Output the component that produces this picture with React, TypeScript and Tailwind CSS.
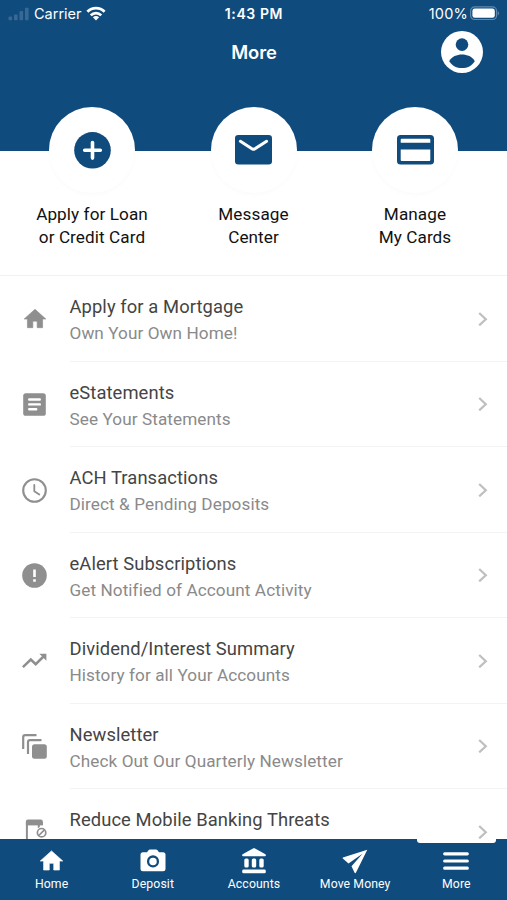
import type { ReactNode } from "react";

const BLUE = "#104b7d";

function Signal() {
  return (
    <svg width="22" height="14" viewBox="0 0 22 14" fill="#386995">
      <rect x="0.5" y="9.400" width="3.6" height="3.8" rx="1" />
      <rect x="6" y="7.400" width="3.6" height="5.8" rx="1" />
      <rect x="11.5" y="4" width="3.6" height="9.2" rx="1" />
      <rect x="17" y="0.8" width="3.6" height="12.4" rx="1" />
    </svg>
  );
}

function Wifi() {
  return (
    <svg width="20" height="15" viewBox="0 0 20 15" fill="none" stroke="#fff" strokeWidth="2.8">
      <path d="M1.4 5.8C6.2 0.9 13.8 0.9 18.6 5.8" />
      <path d="M4.8 9.4C7.7 6.4 12.3 6.4 15.2 9.4" />
      <path d="M10 14.4 6.9 11.3C8.7 9.6 11.3 9.6 13.1 11.3Z" fill="#fff" stroke="none" />
    </svg>
  );
}

function Battery() {
  return (
    <svg width="30" height="15" viewBox="0 0 30 15">
      <rect x="0.6" y="0.9" width="26" height="12.6" rx="4" fill="none" stroke="#6189ad" strokeWidth="1.2" />
      <rect x="2.4" y="2.6" width="22.4" height="9.2" rx="2.4" fill="#fff" />
      <path d="M27.800 5c1.6.7 1.6 3.7 0 4.4z" fill="#6189ad" />
    </svg>
  );
}

function Account() {
  return (
    <svg width="42" height="42" viewBox="0 0 42 42">
      <circle cx="21" cy="21" r="21" fill="#fff" />
      <circle cx="21" cy="13.6" r="6.3" fill={BLUE} />
      <path d="M8.2 30.2C10.6 25.600 16 23.500 21 23.500S31.400 25.600 33.800 30.200C30.900 34.700 26.300 37.100 21 37.100S11.100 34.700 8.200 30.200Z" fill={BLUE} />
    </svg>
  );
}

const homePath = "M10 20v-6h4v6h5v-8h3L12 3 2 12h3v8z";

function HomeIcon() {
  return (
    <svg width="26" height="28" viewBox="0 0 24 24" fill="#8f8f8f" stroke="#8f8f8f" strokeWidth="0.6" strokeLinejoin="round">
      <path d={homePath} />
    </svg>
  );
}

function StatementIcon() {
  return (
    <svg width="23" height="23" viewBox="0 0 23 23">
      <rect x="0.2" y="0.2" width="22.600" height="22.600" rx="2.600" fill="#8f8f8f" />
      <path d="M6.200 6.500h10.600M6.200 11.400h10.600M6.200 16.300h7" stroke="#fff" strokeWidth="2.400" strokeLinecap="round" />
    </svg>
  );
}

function ClockIcon() {
  return (
    <svg width="25" height="25" viewBox="0 0 25 25" fill="none" stroke="#8f8f8f" strokeLinecap="round">
      <circle cx="12.500" cy="12.500" r="11.300" strokeWidth="2.100" />
      <path d="M12.300 7v6.200l5 3.400" strokeWidth="1.800" />
    </svg>
  );
}

function AlertIcon() {
  return (
    <svg width="25" height="25" viewBox="0 0 25 25">
      <circle cx="12.500" cy="12.500" r="12.300" fill="#8f8f8f" />
      <path d="M11.200 6.500h2.600v7.400h-2.600zM11.200 16.200h2.600v2.600h-2.600z" fill="#fff" />
    </svg>
  );
}

function TrendIcon() {
  return (
    <svg width="25" height="16" viewBox="0 0 25 16">
      <path d="M0.900 14.200 8.800 6.500 13.700 11.200 22 3" fill="none" stroke="#8f8f8f" strokeWidth="2.500" />
      <path d="M17.400 0.800h7v7z" fill="#8f8f8f" />
    </svg>
  );
}

function StackIcon() {
  return (
    <svg width="25" height="25" viewBox="0 0 25 25">
      <path d="M1.200 15V3.200q0-2 2-2H14.500M6 20V8.200q0-2 2-2H19.500" fill="none" stroke="#8f8f8f" strokeWidth="2.200" />
      <rect x="10" y="10.200" width="14.800" height="14.600" rx="2.500" fill="#8f8f8f" />
    </svg>
  );
}

function PhoneBlockIcon() {
  return (
    <svg width="25" height="27" viewBox="0 0 25 27">
      <path d="M4.900 6v19.500h13V20M16.800 3v7" fill="none" stroke="#8f8f8f" strokeWidth="2" />
      <path d="M3.900 2.600q0-2 2-2h12.900q2 0 2 2V6.200H3.900z" fill="#8f8f8f" />
      <circle cx="19.600" cy="13.700" r="6" fill="#fff" />
      <path d="M3.900 3H20.800V6.200H3.900z" fill="#8f8f8f" />
      <circle cx="19.600" cy="13.700" r="4.200" fill="none" stroke="#8f8f8f" strokeWidth="1.700" />
      <path d="m16.800 16.500 5.600-5.600" stroke="#8f8f8f" strokeWidth="1.700" />
    </svg>
  );
}

function Chevron() {
  return (
    <svg width="10" height="14" viewBox="0 0 10 14" fill="none" stroke="#bfbfbf" strokeWidth="2.200">
      <path d="m1.200 1 6.600 6.200-6.600 6.200" />
    </svg>
  );
}

const actions: { icon: ReactNode; lines: [string, string] }[] = [
  {
    lines: ["Apply for Loan", "or Credit Card"],
    icon: (
      <svg width="37" height="37" viewBox="0 0 37 37">
        <circle cx="18.500" cy="18.300" r="18.300" fill={BLUE} />
        <path d="M18.500 10.500v15.600M10.700 18.300h15.600" stroke="#fff" strokeWidth="3.600" strokeLinecap="round" />
      </svg>
    ),
  },
  {
    lines: ["Message", "Center"],
    icon: (
      <svg width="37" height="30" viewBox="0 0 37 30">
        <rect width="37" height="29.600" rx="3.300" fill={BLUE} />
        <path d="M5.400 6.300 17.300 13.900q1.200.700 2.400 0L31.600 6.300" fill="none" stroke="#fff" strokeWidth="3" strokeLinecap="round" />
      </svg>
    ),
  },
  {
    lines: ["Manage", "My Cards"],
    icon: (
      <svg width="37" height="30" viewBox="0 0 37 30">
        <rect width="37" height="29.600" rx="3.600" fill={BLUE} />
        <path d="M3.700 4.700q0-1 1-1h27.600q1 0 1 1v3.100H3.700zM3.700 14.600h29.600v10.400q0 1-1 1H4.700q-1 0-1-1z" fill="#fff" />
      </svg>
    ),
  },
];

const rows = [
  { title: "Apply for a Mortgage", sub: "Own Your Own Home!", icon: <HomeIcon /> },
  { title: "eStatements", sub: "See Your Statements", icon: <StatementIcon /> },
  { title: "ACH Transactions", sub: "Direct & Pending Deposits", icon: <ClockIcon /> },
  { title: "eAlert Subscriptions", sub: "Get Notified of Account Activity", icon: <AlertIcon /> },
  { title: "Dividend/Interest Summary", sub: "History for all Your Accounts", icon: <TrendIcon /> },
  { title: "Newsletter", sub: "Check Out Our Quarterly Newsletter", icon: <StackIcon /> },
  { title: "Reduce Mobile Banking Threats", sub: "", icon: <PhoneBlockIcon /> },
];

const tabs: { label: string; icon: ReactNode }[] = [
  {
    label: "Home",
    icon: (
      <svg width="27" height="28" viewBox="0 0 24 24" fill="#fff" stroke="#fff" strokeWidth="0.6" strokeLinejoin="round">
        <path d={homePath} />
      </svg>
    ),
  },
  {
    label: "Deposit",
    icon: (
      <svg width="26" height="24" viewBox="0 0 26 24">
        <path d="M3 3.200h4L8.500 1.200Q9 .500 10 .500h6q1 0 1.500.7L19 3.200h4q2.500 0 2.500 2.500v14q0 2.500-2.500 2.500H3Q.500 22.200.500 19.700v-14Q.500 3.200 3 3.200z" fill="#fff" />
        <circle cx="13" cy="12.400" r="4.900" fill="none" stroke={BLUE} strokeWidth="2.300" />
      </svg>
    ),
  },
  {
    label: "Accounts",
    icon: (
      <svg width="26" height="26" viewBox="0 0 26 26" fill="#fff">
        <path d="M12.400.300q.6-.3 1.200 0L24 5.900q.9.500.9 1.400 0 1-1 1H2.100q-1 0-1-1 0-.9.900-1.400z" />
        <rect x="3.300" y="10.400" width="4.400" height="9.200" rx="1.600" />
        <rect x="10.800" y="10.400" width="4.400" height="9.200" rx="1.600" />
        <rect x="18.300" y="10.400" width="4.400" height="9.200" rx="1.600" />
        <rect x="1.200" y="21.600" width="23.600" height="3.700" rx="1.400" />
      </svg>
    ),
  },
  {
    label: "Move Money",
    icon: (
      <svg width="26" height="25" viewBox="0 0 26 25" fill="#fff">
        <path d="M25.300.700.900 8.500q-.6.400-.1 1L6.500 14.600 20.500 4.800 9.500 17.200 12.600 23.700q.7.900 1.300 0z" />
      </svg>
    ),
  },
  {
    label: "More",
    icon: (
      <svg width="26" height="20" viewBox="0 0 26 20" stroke="#fff" strokeWidth="3.200" strokeLinecap="round">
        <path d="M1.700 2.800h22.600M1.700 10h22.600M1.700 17.200h22.600" />
      </svg>
    ),
  },
];

export default function App() {
  return (
    <div className="flex h-[900px] w-[507px] flex-col overflow-hidden bg-white font-[Roboto,sans-serif]">
      <header className="h-[151px] shrink-0 bg-[#104b7d] text-white">
        <div className="grid h-[26px] grid-cols-3 items-center pt-px pr-[7px] pl-[8px] font-[Inter,sans-serif] text-[14px]">
          <div className="flex items-center gap-[4px]">
            <Signal />
            <span className="text-[14.500px]">Carrier</span>
            <Wifi />
          </div>
          <div className="text-center font-semibold tracking-[0.600px]">1:43 PM</div>
          <div className="flex items-center justify-end gap-[2px]">
            <span className="text-[14.500px] tracking-[0.200px]">100%</span>
            <Battery />
          </div>
        </div>
        <div className="grid h-[52px] grid-cols-[1fr_auto_1fr] items-center pr-[24px] pl-[25px]">
          <span />
          <h1 className="pt-[2px] font-[Inter,sans-serif] text-[18.370px] font-semibold tracking-[-0.100px]">More</h1>
          <span className="flex justify-end">
            <Account />
          </span>
        </div>
      </header>

      <section className="-mt-[44px] flex h-[169px] shrink-0 justify-center border-b border-[#f1f1f1]">
        {actions.map((a) => (
          <div key={a.lines[0]} className="flex w-[161.500px] flex-col items-center">
            <div className="flex size-[86px] items-center justify-center rounded-full bg-white shadow-[0_2px_4px_rgba(0,0,0,0.02)]">
              {a.icon}
            </div>
            <p className="mt-[10px] text-center text-[17.150px] leading-[22.500px] tracking-[0.080px] text-[#111]">
              {a.lines[0]}
              <br />
              {a.lines[1]}
            </p>
          </div>
        ))}
      </section>

      <main className="min-h-0 flex-1 overflow-hidden">
        {rows.map((r) => (
          <div key={r.title} className="flex h-[85.500px] items-stretch">
            <div className="flex w-[69.500px] items-center justify-center pt-px">{r.icon}</div>
            <div className="flex flex-1 items-center border-b border-[#f3f3f3] pr-[19px]">
              <div className="h-[48px] flex-1 whitespace-nowrap">
                <div className="text-[18.370px] leading-[26px] tracking-[0.090px] text-[#444]">{r.title}</div>
                <div className="text-[17.150px] leading-[26px] tracking-[0.090px] text-[#8a8a8a]">{r.sub}</div>
              </div>
              <div className="pt-px">
                <Chevron />
              </div>
            </div>
          </div>
        ))}
      </main>

      <nav className="relative grid h-[61px] shrink-0 grid-cols-5 bg-[#104b7d] pl-px text-white">
        <span className="absolute top-0 right-[11px] h-[4px] w-[79px] rounded-b-[3px] bg-white" />
        {tabs.map((t) => (
          <div key={t.label} className="flex flex-col items-center pt-[8px]">
            <div className="flex h-[28px] items-center">{t.icon}</div>
            <span className="text-[12.250px] leading-[19px] tracking-[0.100px] whitespace-nowrap">{t.label}</span>
          </div>
        ))}
      </nav>
    </div>
  );
}
